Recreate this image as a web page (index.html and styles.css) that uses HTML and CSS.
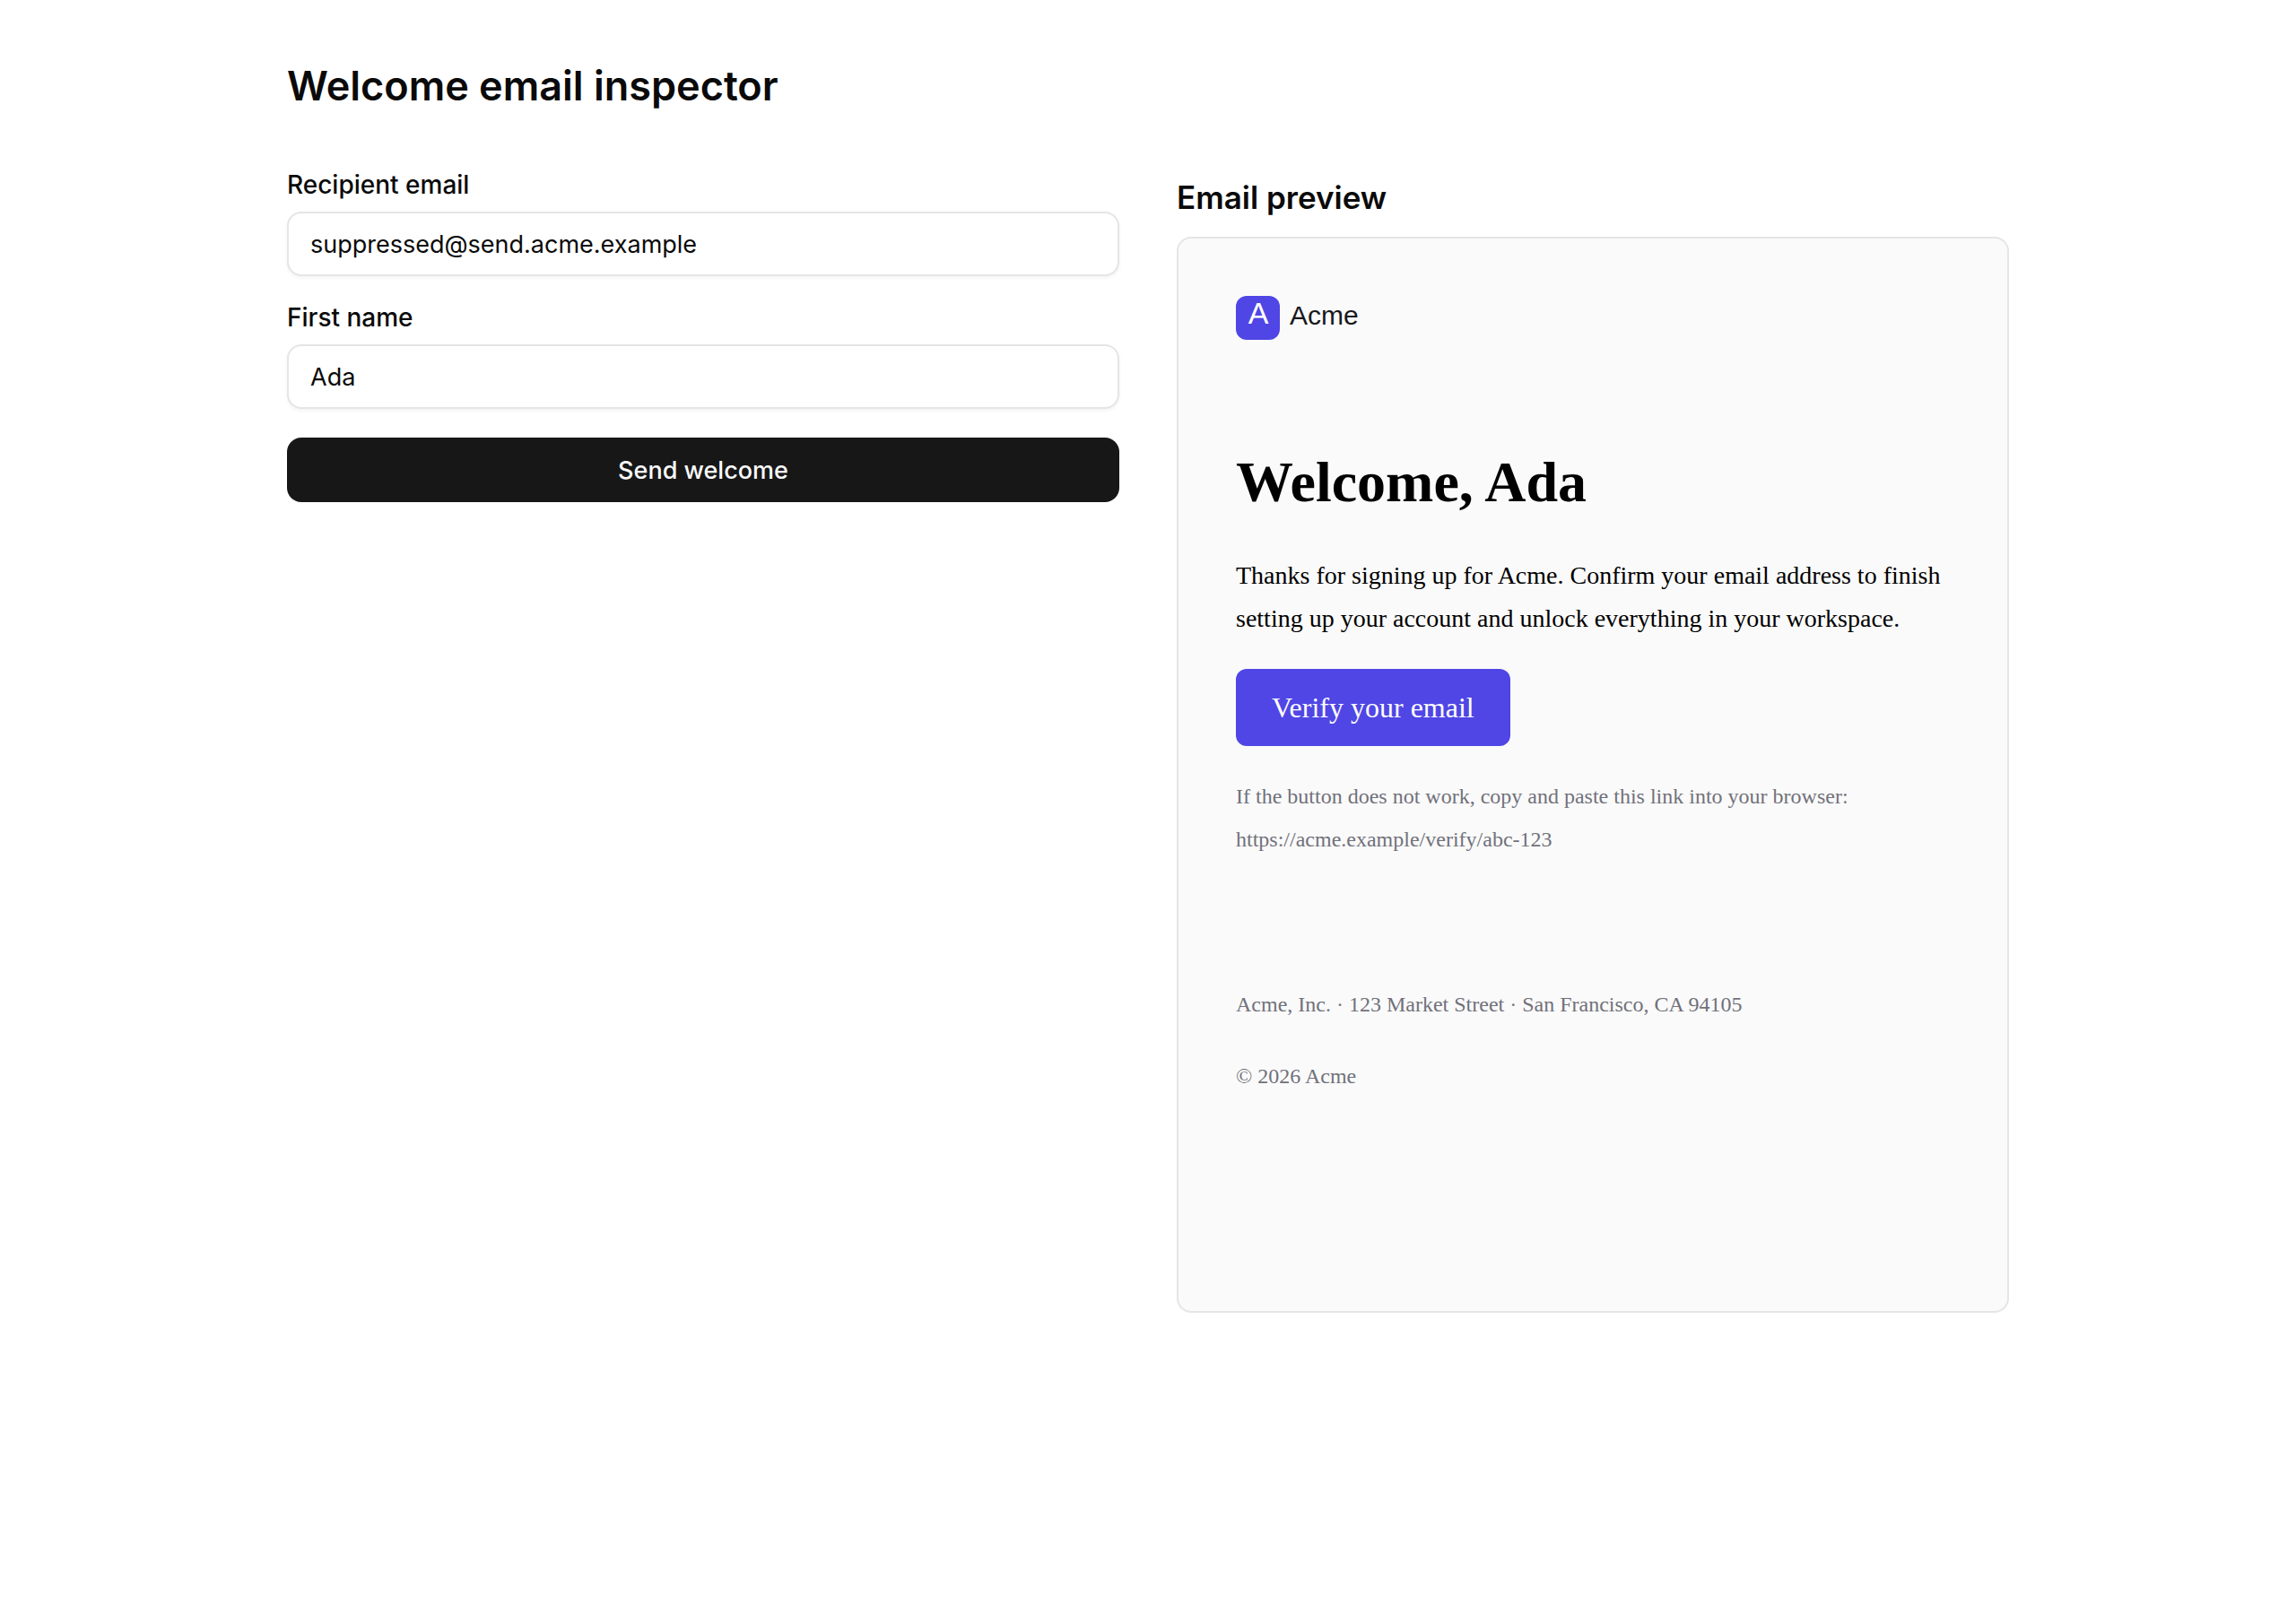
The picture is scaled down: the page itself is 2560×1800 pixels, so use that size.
FILE: index.html
```html
<!DOCTYPE html>
<html lang="en">
<head>
    <meta charset="UTF-8">
    <meta name="viewport" content="width=device-width, initial-scale=1.0">
    <title>Welcome email inspector</title>
    <link rel="stylesheet" href="styles.css">
</head>
<body>
    <main class="container">
        <h1 class="page-title">Welcome email inspector</h1>

        <div class="columns">
            <form class="send-form">
                <div class="field">
                    <label for="email">Recipient email</label>
                    <input type="email" id="email" name="email" value="suppressed@send.acme.example">
                </div>
                <div class="field">
                    <label for="firstName">First name</label>
                    <input type="text" id="firstName" name="firstName" value="Ada">
                </div>
                <button type="submit">Send welcome</button>
            </form>

            <section class="preview">
                <h2>Email preview</h2>
                <article class="email">
                    <header class="email-header">
                        <svg class="logo" width="150" height="49" viewBox="0 0 150 49" role="img" aria-label="Acme">
                            <rect width="49" height="49" rx="12" fill="#4f46e5"/>
                            <text class="logo-mark" x="25" y="31">A</text>
                            <text class="logo-name" x="60" y="32">Acme</text>
                        </svg>
                    </header>

                    <div class="email-body">
                        <h1>Welcome, Ada</h1>
                        <p>Thanks for signing up for Acme. Confirm your email address to finish setting up your account and unlock everything in your workspace.</p>
                        <a class="verify" href="#verify">Verify your email</a>
                        <p class="muted">If the button does not work, copy and paste this link into your browser:<br>https://acme.example/verify/abc-123</p>
                    </div>

                    <footer class="email-footer">
                        <p class="muted">Acme, Inc. · 123 Market Street · San Francisco, CA 94105</p>
                        <p class="muted">© 2026 Acme</p>
                    </footer>
                </article>
            </section>
        </div>
    </main>
</body>
</html>
```
FILE: styles.css
```css
* {
    box-sizing: border-box;
}
body {
    margin: 0;
    background-color: #fff;
    color: #0a0a0a;
    font-family: Inter, sans-serif;
    font-size: 28px;
}
h1, h2, p {
    margin: 0;
}
.container {
    display: flex;
    flex-direction: column;
    gap: 64px;
    max-width: 2048px;
    margin: 0 auto;
    padding: 64px;
}
.page-title {
    font-size: 45px;
    font-weight: 600;
    line-height: 64px;
}
.columns {
    display: grid;
    grid-template-columns: 1fr 1fr;
    gap: 64px;
    align-items: start;
}

/* form */
.send-form {
    display: flex;
    flex-direction: column;
    gap: 32px;
}
.field {
    display: flex;
    flex-direction: column;
    gap: 16px;
}
label {
    font-weight: 500;
    line-height: 28px;
}
input {
    width: 100%;
    height: 72px;
    padding: 0 24px;
    border: 2px solid #e5e5e5;
    border-radius: 16px;
    background-color: #fff;
    box-shadow: 0 2px 4px rgba(0, 0, 0, 0.05);
    color: inherit;
    font: inherit;
    font-size: 27px;
}
button {
    height: 72px;
    border: none;
    border-radius: 16px;
    background-color: #171717;
    color: #fafafa;
    font: inherit;
    font-size: 27px;
    font-weight: 500;
    cursor: pointer;
}

/* preview */
.preview {
    display: flex;
    flex-direction: column;
    gap: 16px;
}
.preview h2 {
    font-size: 35px;
    font-weight: 600;
    line-height: 56px;
}
.email {
    min-height: 1200px;
    padding: 64px;
    border: 2px solid #e5e5e5;
    border-radius: 16px;
    background-color: #fafafa;
    color: #000;
    font-family: "Liberation Serif", serif;
    line-height: 48px;
}
.email-header {
    height: 56px;
    margin-bottom: 104px;
}
.logo {
    display: block;
    font-family: "Liberation Sans", sans-serif;
}
.logo-mark {
    fill: #fff;
    font-size: 34px;
    text-anchor: middle;
}
.logo-name {
    fill: #18181b;
    font-size: 30px;
}
.email-body {
    display: flex;
    flex-direction: column;
    align-items: flex-start;
    gap: 32px;
}
.email-body h1 {
    font-size: 64px;
    line-height: 96px;
}
.verify {
    padding: 19px 40px;
    border-radius: 12px;
    background-color: #4f46e5;
    color: #fff;
    font-size: 32px;
    text-decoration: none;
}
.muted {
    color: #71717a;
    font-size: 24px;
}
.email-footer {
    display: flex;
    flex-direction: column;
    gap: 32px;
    margin-top: 136px;
}
```
